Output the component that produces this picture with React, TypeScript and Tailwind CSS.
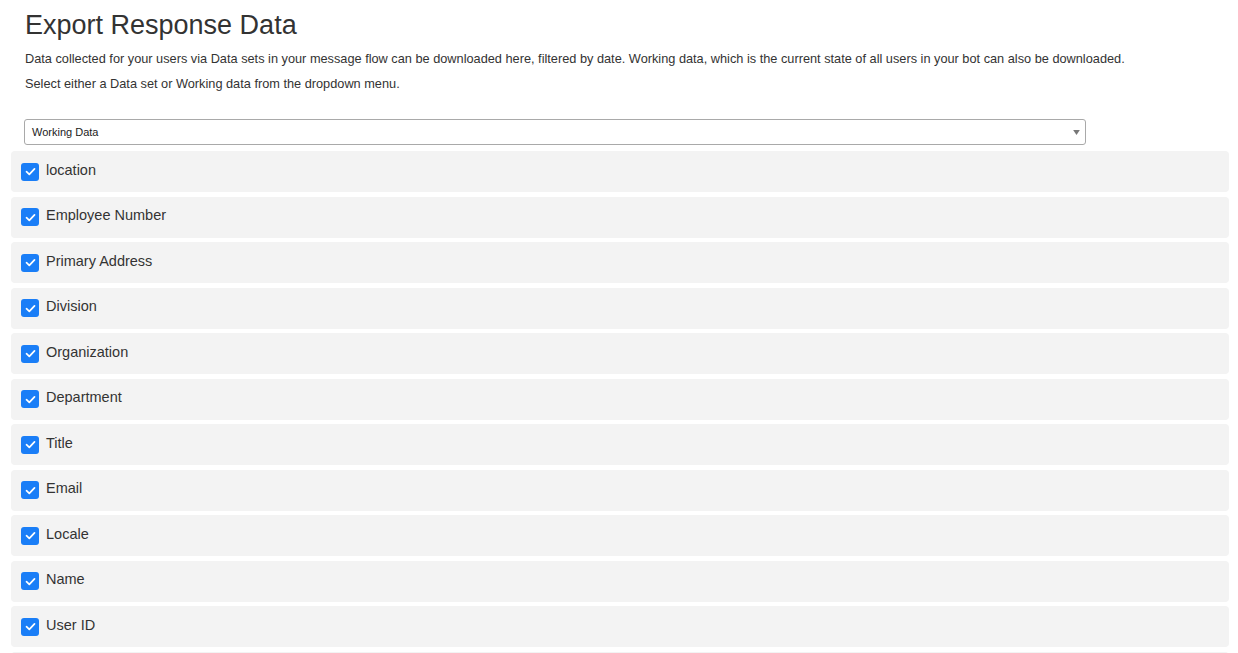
const fields = [
  'location',
  'Employee Number',
  'Primary Address',
  'Division',
  'Organization',
  'Department',
  'Title',
  'Email',
  'Locale',
  'Name',
  'User ID',
]

function CheckBox() {
  return (
    <span className="flex items-center justify-center w-[18px] h-[18px] rounded-[3px] bg-[#1a7ef7] shrink-0">
      <svg viewBox="0 0 12 12" className="w-[13px] h-[13px]" fill="none" stroke="white" strokeWidth="1.6" strokeLinecap="round" strokeLinejoin="round">
        <path d="M2.3 6.2 L4.9 8.6 L9.7 3.6" />
      </svg>
    </span>
  )
}

export default function App() {
  return (
    <div className="w-[1238px] h-[653px] overflow-hidden bg-white text-[#333] font-['Liberation_Sans',Arial,sans-serif]">
      <div className="px-[25px] pt-[10px]">
        <h1 className="text-[27px] leading-[31px] font-normal text-[#333]">Export Response Data</h1>
        <p className="mt-[9px] text-[12.75px] leading-[18px]">
          Data collected for your users via Data sets in your message flow can be downloaded here, filtered by date. Working data, which is the current state of all users in your bot can also be downloaded.
        </p>
        <p className="mt-[7px] text-[12.75px] leading-[18px]">Select either a Data set or Working data from the dropdown menu.</p>
      </div>

      {/* Dropdown */}
      <div className="pl-[24px] pt-[26px]">
        <div className="relative w-[1062px] h-[26px] border border-[#a9a9a9] rounded-[3px] bg-white flex items-center px-[7px]">
          <span className="text-[11px] text-[#222]">Working Data</span>
          <svg viewBox="0 0 8 6" className="absolute right-[5px] top-[10px] w-[7px] h-[5px]">
            <path d="M0 0 H8 L4 6 Z" fill="#777" />
          </svg>
        </div>
      </div>

      {/* Field rows */}
      <div className="pl-[11px] pr-[9px] pt-[6px] flex flex-col gap-[4.5px]">
        {fields.map((field) => (
          <div key={field} className="h-[41px] rounded-[4px] bg-[#f3f3f3] flex items-center px-[10px] gap-[7px]">
            <CheckBox />
            <span className="text-[14.5px] text-[#333] -mt-[2px]">{field}</span>
          </div>
        ))}
        <div className="h-[41px] rounded-[4px] bg-[#f3f3f3]" />
      </div>
    </div>
  )
}
